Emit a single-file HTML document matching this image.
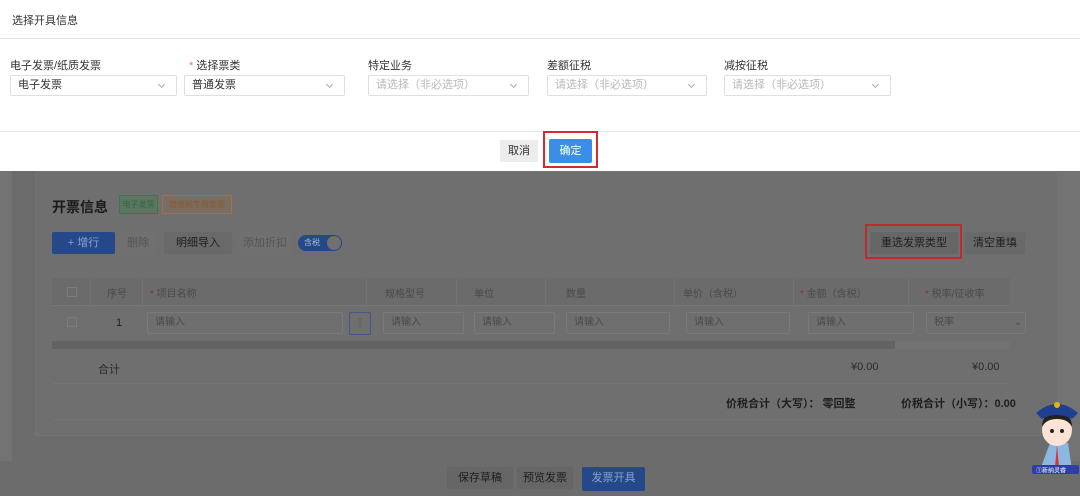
<!DOCTYPE html>
<html><head><meta charset="utf-8"><style>
*{box-sizing:border-box;margin:0;padding:0}
body{width:1080px;height:496px;overflow:hidden;background:#6c6c6c;font-family:"Liberation Sans","Noto Sans CJK SC",sans-serif;font-size:11px;color:#333;position:relative}
.a{position:absolute}
.modal{left:0;top:0;width:1080px;height:171px;background:#fff}
.sel{position:absolute;height:21px;border:1px solid #dcdfe6;border-radius:2px;padding:0 7px;line-height:19px;font-size:11px;color:#333}
.sel.ph{color:#b8b8b8}
.sel:after{content:"";position:absolute;right:12px;top:6px;width:4px;height:4px;border-right:1px solid #aaa;border-bottom:1px solid #aaa;transform:rotate(45deg)}
.lbl{position:absolute;top:57px;font-size:11px;color:#333}
.btn{position:absolute;height:22px;line-height:22px;text-align:center;font-size:11px;border-radius:2px}
.inp{position:absolute;top:312px;height:22px;border:1px solid #7a7a7a;border-radius:2px;padding:0 7px;line-height:20px;color:#4a4a4a;font-size:10px}
.th{position:absolute;top:285px;color:#4a4a4a;font-size:10px}
.vl{position:absolute;top:279px;width:1px;height:27px;background:#747474}
</style></head><body>
<div class="a" style="left:0;top:171px;width:12px;height:290px;background:#737373"></div>
<div class="a" style="left:1058px;top:171px;width:22px;height:290px;background:#737373"></div>
<div class="a" style="left:35px;top:171px;width:1023px;height:265px;background:#6f6f6f;border:1px solid #747474"></div>

<div class="a modal">
 <div class="a" style="left:12px;top:12px;font-size:11px;color:#333">选择开具信息</div>
 <div class="a" style="left:0;top:38px;width:1080px;height:1px;background:#e8e8e8"></div>
 <div class="lbl" style="left:10px">电子发票/纸质发票</div>
 <div class="lbl" style="left:189px"><span style="color:#f56c6c">*</span> 选择票类</div>
 <div class="lbl" style="left:368px">特定业务</div>
 <div class="lbl" style="left:547px">差额征税</div>
 <div class="lbl" style="left:724px">减按征税</div>
 <div class="sel" style="left:10px;top:75px;width:167px">电子发票</div>
 <div class="sel" style="left:184px;top:75px;width:161px">普通发票</div>
 <div class="sel ph" style="left:368px;top:75px;width:161px">请选择（非必选项）</div>
 <div class="sel ph" style="left:547px;top:75px;width:160px">请选择（非必选项）</div>
 <div class="sel ph" style="left:724px;top:75px;width:167px">请选择（非必选项）</div>
 <div class="a" style="left:0;top:131px;width:1080px;height:1px;background:#e8e8e8"></div>
 <div class="btn" style="left:500px;top:140px;width:38px;background:#ececec;color:#333">取消</div>
 <div class="btn" style="left:549px;top:139px;width:43px;height:24px;line-height:24px;background:#3a8ee6;color:#fff">确定</div>
 <div class="a" style="left:543px;top:131px;width:55px;height:37px;border:2px solid #d9272e"></div>
</div>

<div class="a" style="left:52px;top:197px;font-size:14px;font-weight:bold;color:#1a1a1a">开票信息</div>
<div class="a" style="left:119px;top:195px;width:39px;height:19px;border:1px solid #2f7d4a;background:#5f7563;color:#2c6b3e;font-size:8px;line-height:17px;text-align:center">电子发票</div>
<div class="a" style="left:162px;top:195px;width:70px;height:19px;border:1px solid #9a7350;background:#7a6d63;color:#8a5a2a;font-size:8px;line-height:17px;text-align:center">增值税专用发票</div>
<div class="btn" style="left:52px;top:232px;width:63px;background:#24488a;color:#8aa3cc">+ 增行</div>
<div class="btn" style="left:119px;top:232px;width:38px;background:#707070;color:#555">删除</div>
<div class="btn" style="left:164px;top:232px;width:68px;background:#696969;color:#1e1e1e">明细导入</div>
<div class="btn" style="left:238px;top:232px;width:54px;background:#707070;color:#555">添加折扣</div>
<div class="a" style="left:298px;top:235px;width:44px;height:16px;border-radius:8px;background:#24488a;color:#aabbd8;font-size:8px;line-height:16px;padding-left:6px">含税<span class="a" style="right:1px;top:1px;width:14px;height:14px;border-radius:7px;background:#707070"></span></div>

<div class="btn" style="left:870px;top:232px;width:88px;background:#666;color:#1e1e1e">重选发票类型</div>
<div class="a" style="left:865px;top:224px;width:97px;height:35px;border:2px solid #c02a2e"></div>
<div class="btn" style="left:965px;top:232px;width:60px;background:#696969;color:#1e1e1e">清空重填</div>

<div class="a" style="left:52px;top:278px;width:958px;height:28px;background:#6b6b6b;border-bottom:1px solid #777"></div>
<div class="a" style="left:67px;top:287px;width:10px;height:10px;border:1px solid #7c7c7c"></div>
<div class="th" style="left:107px">序号</div>
<div class="th" style="left:150px"><span style="color:#8a3030">*</span> 项目名称</div>
<div class="th" style="left:385px">规格型号</div>
<div class="th" style="left:474px">单位</div>
<div class="th" style="left:566px">数量</div>
<div class="th" style="left:683px">单价（含税）</div>
<div class="th" style="left:800px"><span style="color:#8a3030">*</span> 金额（含税）</div>
<div class="th" style="left:925px"><span style="color:#8a3030">*</span> 税率/征收率</div>
<div class="vl" style="left:90px"></div><div class="vl" style="left:142px"></div><div class="vl" style="left:366px"></div><div class="vl" style="left:456px"></div><div class="vl" style="left:545px"></div><div class="vl" style="left:674px"></div><div class="vl" style="left:793px"></div><div class="vl" style="left:908px"></div>
<div class="a" style="left:67px;top:317px;width:10px;height:10px;border:1px solid #7c7c7c"></div>
<div class="a" style="left:116px;top:317px;font-size:11px;color:#1e1e1e">1</div>
<div class="inp" style="left:147px;top:312px;width:196px">请输入</div>
<div class="a" style="left:349px;top:312px;width:22px;height:23px;border:1px solid #3f5a8a;border-radius:2px;color:#555;text-align:center;line-height:21px">⋮</div>
<div class="inp" style="left:383px;width:81px">请输入</div>
<div class="inp" style="left:474px;width:81px">请输入</div>
<div class="inp" style="left:566px;width:104px">请输入</div>
<div class="inp" style="left:686px;width:104px">请输入</div>
<div class="inp" style="left:808px;width:106px">请输入</div>
<div class="inp" style="left:926px;width:100px">税率<span class="a" style="right:3px;top:0">⌄</span></div>
<div class="a" style="left:52px;top:341px;width:958px;height:8px;background:#727272"></div>
<div class="a" style="left:52px;top:341px;width:843px;height:8px;background:#636363"></div>
<div class="a" style="left:98px;top:361px;color:#2a2a2a">合计</div>
<div class="a" style="left:851px;top:361px;color:#2a2a2a">¥0.00</div>
<div class="a" style="left:972px;top:361px;color:#2a2a2a">¥0.00</div>
<div class="a" style="left:52px;top:383px;width:958px;height:1px;background:#747474"></div>
<div class="a" style="left:726px;top:395px;font-weight:bold;color:#1e1e1e">价税合计（大写）： 零回整</div>
<div class="a" style="left:901px;top:395px;font-weight:bold;color:#1e1e1e">价税合计（小写）：0.00</div>
<div class="a" style="left:52px;top:419px;width:958px;height:1px;background:#747474"></div>

<div class="btn" style="left:447px;top:467px;width:66px;background:#666;color:#1e1e1e">保存草稿</div>
<div class="btn" style="left:517px;top:467px;width:56px;background:#666;color:#1e1e1e">预览发票</div>
<div class="btn" style="left:582px;top:467px;width:63px;height:24px;background:#24488a;color:#8aa3cc">发票开具</div>

<svg class="a" style="left:1030px;top:395px" width="50" height="80" viewBox="0 0 50 80">
 <path d="M20 48 L10 75 L42 75 L38 48Z" fill="#8cb7e0"/>
 <path d="M27 50 L25 72 L29 72Z" fill="#d33"/>
 <ellipse cx="27" cy="35" rx="15" ry="16" fill="#fbe4d5"/>
 <path d="M12 32 Q12 18 27 18 Q42 18 42 32 Q38 24 27 24 Q16 24 12 32Z" fill="#222"/>
 <path d="M6 18 Q27 0 48 18 L42 24 Q27 16 12 24Z" fill="#1f3f8f"/>
 <circle cx="27" cy="10" r="3" fill="#e8b200"/>
 <circle cx="22" cy="36" r="2" fill="#222"/><circle cx="32" cy="36" r="2" fill="#222"/>
 <rect x="2" y="70" width="47" height="9" rx="2" fill="#2b3fa6"/>
 <text x="6" y="77.5" font-size="6" fill="#fff" font-family="Noto Sans CJK SC,sans-serif">①新纳灵睿</text>
</svg>
</body></html>
